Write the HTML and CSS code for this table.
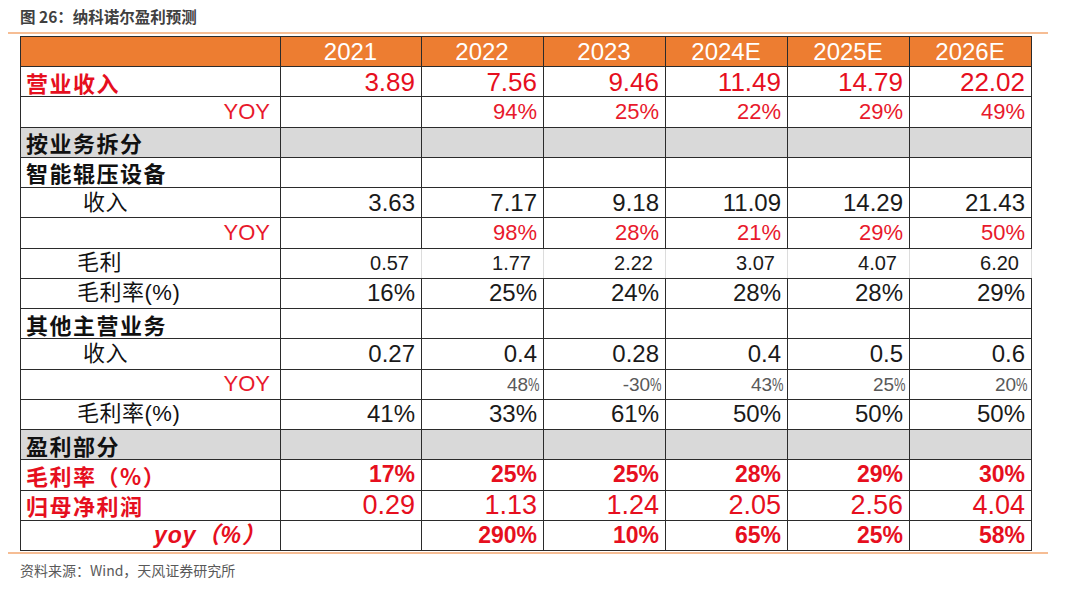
FILE: index.html
```html
<!DOCTYPE html>
<html lang="zh-CN">
<head>
<meta charset="utf-8">
<title>纳科诺尔盈利预测</title>
<link rel="stylesheet" href="styles.css">
</head>
<body>
<div class="page">
  <div class="title">图 26：纳科诺尔盈利预测</div>
  <div class="rule"></div>
  <table class="fin">
    <colgroup>
      <col class="c-label"><col class="c-first"><col class="c-data"><col class="c-data"><col class="c-data"><col class="c-data"><col class="c-data">
    </colgroup>
    <thead>
      <tr class="head">
        <th></th><th>2021</th><th>2022</th><th>2023</th><th>2024E</th><th>2025E</th><th>2026E</th>
      </tr>
    </thead>
    <tbody>
      <tr class="r-rev">
        <td class="lb bold red">营业收入</td><td>3.89</td><td>7.56</td><td>9.46</td><td>11.49</td><td>14.79</td><td>22.02</td>
      </tr>
      <tr class="r-yoy">
        <td class="yoy">YOY</td><td></td><td>94%</td><td>25%</td><td>22%</td><td>29%</td><td>49%</td>
      </tr>
      <tr class="r-sec">
        <td class="lb bold">按业务拆分</td><td></td><td></td><td></td><td></td><td></td><td></td>
      </tr>
      <tr class="r-plain">
        <td class="lb bold">智能辊压设备</td><td></td><td></td><td></td><td></td><td></td><td></td>
      </tr>
      <tr class="r-num">
        <td class="lb ind ind-a">收入</td><td>3.63</td><td>7.17</td><td>9.18</td><td>11.09</td><td>14.29</td><td>21.43</td>
      </tr>
      <tr class="r-yoy">
        <td class="yoy">YOY</td><td></td><td>98%</td><td>28%</td><td>21%</td><td>29%</td><td>50%</td>
      </tr>
      <tr class="r-gp">
        <td class="lb ind">毛利</td><td>0.57</td><td>1.77</td><td>2.22</td><td>3.07</td><td>4.07</td><td>6.20</td>
      </tr>
      <tr class="r-num">
        <td class="lb ind">毛利率(%)</td><td>16%</td><td>25%</td><td>24%</td><td>28%</td><td>28%</td><td>29%</td>
      </tr>
      <tr class="r-plain">
        <td class="lb bold">其他主营业务</td><td></td><td></td><td></td><td></td><td></td><td></td>
      </tr>
      <tr class="r-num">
        <td class="lb ind ind-a">收入</td><td>0.27</td><td>0.4</td><td>0.28</td><td>0.4</td><td>0.5</td><td>0.6</td>
      </tr>
      <tr class="r-grey">
        <td class="yoy">YOY</td><td></td><td>48<span class="pct">%</span></td><td>-30<span class="pct">%</span></td><td>43<span class="pct">%</span></td><td>25<span class="pct">%</span></td><td>20<span class="pct">%</span></td>
      </tr>
      <tr class="r-num">
        <td class="lb ind">毛利率(%)</td><td>41%</td><td>33%</td><td>61%</td><td>50%</td><td>50%</td><td>50%</td>
      </tr>
      <tr class="r-sec">
        <td class="lb bold">盈利部分</td><td></td><td></td><td></td><td></td><td></td><td></td>
      </tr>
      <tr class="r-margin">
        <td class="lb bold red">毛利率（%）</td><td>17%</td><td>25%</td><td>25%</td><td>28%</td><td>29%</td><td>30%</td>
      </tr>
      <tr class="r-np">
        <td class="lb bold red">归母净利润</td><td>0.29</td><td>1.13</td><td>1.24</td><td>2.05</td><td>2.56</td><td>4.04</td>
      </tr>
      <tr class="r-npyoy">
        <td class="yoy-it">yoy（%）</td><td></td><td>290%</td><td>10%</td><td>65%</td><td>25%</td><td>58%</td>
      </tr>
    </tbody>
  </table>
  <div class="rule rule-bottom"></div>
  <div class="source">资料来源：Wind，天风证券研究所</div>
</div>
</body>
</html>
```

FILE: styles.css
```css
html, body {
  margin: 0;
  padding: 0;
  background: #ffffff;
}

body {
  font-family: "Liberation Sans", "Noto Sans CJK SC", sans-serif;
  color: #1a1a1a;
}

.page {
  width: 1080px;
  height: 590px;
}

.title {
  height: 32px;
  line-height: 32px;
  padding-left: 20px;
  font-family: "Noto Sans CJK SC", sans-serif;
  font-size: 15.5px;
  font-weight: 700;
  color: #404040;
}

.rule {
  margin: 0 32px 0 8px;
  height: 2px;
  background: #f6bd94;
}

.rule-bottom {
  margin-top: 1px;
}

.fin {
  margin: 2px 0 0 20px;
  width: 1011px;
  height: 515px;
  table-layout: fixed;
  border-collapse: collapse;
}

.c-label { width: 260px; }
.c-first { width: 141px; }
.c-data { width: 122px; }

.fin th,
.fin td {
  border: 1px solid #2b2b2b;
  padding: 0 6px 0 5px;
  height: 29px;
  text-align: right;
  vertical-align: middle;
  white-space: nowrap;
  font-weight: 400;
  line-height: 1;
}

.fin .head th {
  background: #ed7d31;
  color: #ffffff;
  text-align: center;
  font-size: 24px;
}

/* label column */
.fin td.lb {
  text-align: left;
  padding-left: 5px;
  padding-right: 0;
  font-family: "Noto Sans CJK SC", sans-serif;
  font-size: 22px;
  color: #111111;
}

.fin td.bold {
  font-weight: 700;
  letter-spacing: 1.5px;
}

.fin td.red {
  color: #e60f1e;
}

.fin td.ind {
  padding-left: 56px;
  font-family: "Liberation Sans", "Noto Sans CJK SC", sans-serif;
  letter-spacing: 0.5px;
}

.fin td.ind-a {
  padding-left: 62px;
}

.fin td.yoy {
  text-align: right;
  padding-right: 10px;
  font-family: "Liberation Sans", sans-serif;
  color: #e8192c;
  font-size: 22px;
  font-weight: 400;
}

.fin td.yoy-it {
  text-align: right;
  padding-right: 14px;
  font-family: "Liberation Sans", "Noto Sans CJK SC", sans-serif;
  color: #e60f1e;
  font-size: 23px;
  font-weight: 700;
  font-style: italic;
  letter-spacing: 1px;
}

/* row types (data cells) */
.r-rev td { color: #e60f1e; font-size: 26px; }
.r-yoy td { color: #e8192c; font-size: 22px; }
.r-sec td { background: #d9d9d9; }
.r-num td { font-size: 24px; color: #1a1a1a; }
.r-gp td { font-size: 20px; color: #1a1a1a; padding-right: 12px; }
.r-gp td + td { border-left-color: #dcdcdc; border-right-color: #dcdcdc; }
.r-gp td.lb + td { border-left-color: #2b2b2b; }
.r-grey td { font-size: 19px; color: #595959; padding-right: 3px; }
.r-margin td { color: #e60f1e; font-size: 23px; font-weight: 700; }
.r-np td { color: #e60f1e; font-size: 27px; }
.r-npyoy td { color: #e60f1e; font-size: 23px; font-weight: 700; }

.pct {
  display: inline-block;
  transform: scaleX(0.68);
  transform-origin: left center;
  margin-right: -5px;
}

.source {
  padding: 6px 0 0 20px;
  font-family: "Noto Sans CJK SC", sans-serif;
  font-size: 14px;
  color: #595959;
}
```
